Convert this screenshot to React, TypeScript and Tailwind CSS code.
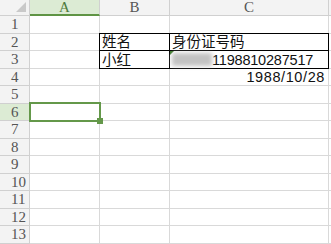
import React from "react";

const rowHeights = [18, 17, 18, 17, 18, 17, 18, 17, 18, 17, 18, 17, 18];

const cellFont = { fontFamily: '"Liberation Sans", "Noto Sans CJK SC", sans-serif' };
const headFont = { fontFamily: '"Liberation Serif", serif' };

function RowHeader({ n, active }: { n: number; active: boolean }) {
  return (
    <div
      className={`flex items-center pl-[11px] text-[15px] text-[#555] border-r border-b border-[#d0d0d0] ${
        active ? "bg-[#dcebd4] text-[#4f7a3c]" : "bg-[#f3f3f3]"
      }`}
      style={headFont}
    >
      {n}
    </div>
  );
}

function Cell({ className = "", children }: { className?: string; children?: React.ReactNode }) {
  return (
    <div className={`relative border-r border-b border-[#d9d9d9] text-[14.5px] leading-none text-[#111] ${className}`} style={cellFont}>
      {children}
    </div>
  );
}

export default function App() {
  return (
    <div className="w-[331px] h-[244px] overflow-hidden bg-white relative">
      <div
        className="grid grid-cols-[30px_70px_70px_159px_1fr]"
        style={{ gridTemplateRows: `16px ${rowHeights.map((h) => h + "px").join(" ")}` }}
      >
        {/* header row */}
        <div className="relative bg-[#f3f3f3] border-r border-b border-[#d0d0d0]">
          <div className="absolute right-[3px] bottom-[3px] w-0 h-0 border-l-[10px] border-l-transparent border-b-[10px] border-b-[#c9c9c9]" />
        </div>
        <div className="flex items-center justify-center bg-[#dcebd4] border-r border-[#d0d0d0] border-b-2 border-b-[#5f9444] text-[15px] text-[#4f7a3c]" style={headFont}>
          A
        </div>
        <div className="flex items-center justify-center bg-[#f3f3f3] border-r border-b border-[#d0d0d0] text-[15px] text-[#555]" style={headFont}>
          B
        </div>
        <div className="flex items-center justify-center bg-[#f3f3f3] border-r border-b border-[#d0d0d0] text-[15px] text-[#555]" style={headFont}>
          C
        </div>
        <div className="bg-[#f3f3f3] border-b border-[#d0d0d0]" />

        {rowHeights.map((_, i) => {
          const n = i + 1;
          return (
            <React.Fragment key={n}>
              <RowHeader n={n} active={n === 6} />
              <Cell>
                {n === 6 && (
                  <>
                    <div className="absolute -left-[1px] -top-[2px] w-[72px] h-[20px] border-2 border-[#64984a] z-10" />
                    <div className="absolute -right-[4px] -bottom-[4px] w-[6px] h-[6px] bg-[#64984a] z-20" />
                  </>
                )}
              </Cell>
              <Cell
                className={
                  n === 2
                    ? "flex items-end pl-[2px] pb-[1px] border-l border-l-black border-t border-t-black border-r-black border-b-black -ml-px -mt-px"
                    : n === 3
                    ? "flex items-end pl-[2px] pb-[1px] border-l border-l-black border-r-black border-b-black -ml-px"
                    : ""
                }
              >
                {n === 2 && "姓名"}
                {n === 3 && "小红"}
              </Cell>
              <Cell
                className={
                  n === 2
                    ? "flex items-end pl-[2px] pb-[1px] border-t border-t-black border-r-black border-b-black -mt-px"
                    : n === 3
                    ? "flex items-end pl-[2px] pb-[1px] border-r-black border-b-black"
                    : n === 4
                    ? "flex items-end justify-end pr-[3px] pb-[1px]"
                    : ""
                }
              >
                {n === 2 && "身份证号码"}
                {n === 3 && (
                  <>
                    <div className="absolute left-0 top-0 w-0 h-0 border-t-[4px] border-t-[#3c7a2a] border-r-[4px] border-r-transparent" />
                    <span className="inline-block w-[40px] h-[13px] mb-[1px] bg-[#c2c2c2] blur-[2px]" />
                    <span className="tracking-[-0.2px]">1198810287517</span>
                  </>
                )}
                {n === 4 && <span className="tracking-[0.6px]">1988/10/28</span>}
              </Cell>
              <div className="border-b border-[#d9d9d9]" />
            </React.Fragment>
          );
        })}
      </div>
    </div>
  );
}
